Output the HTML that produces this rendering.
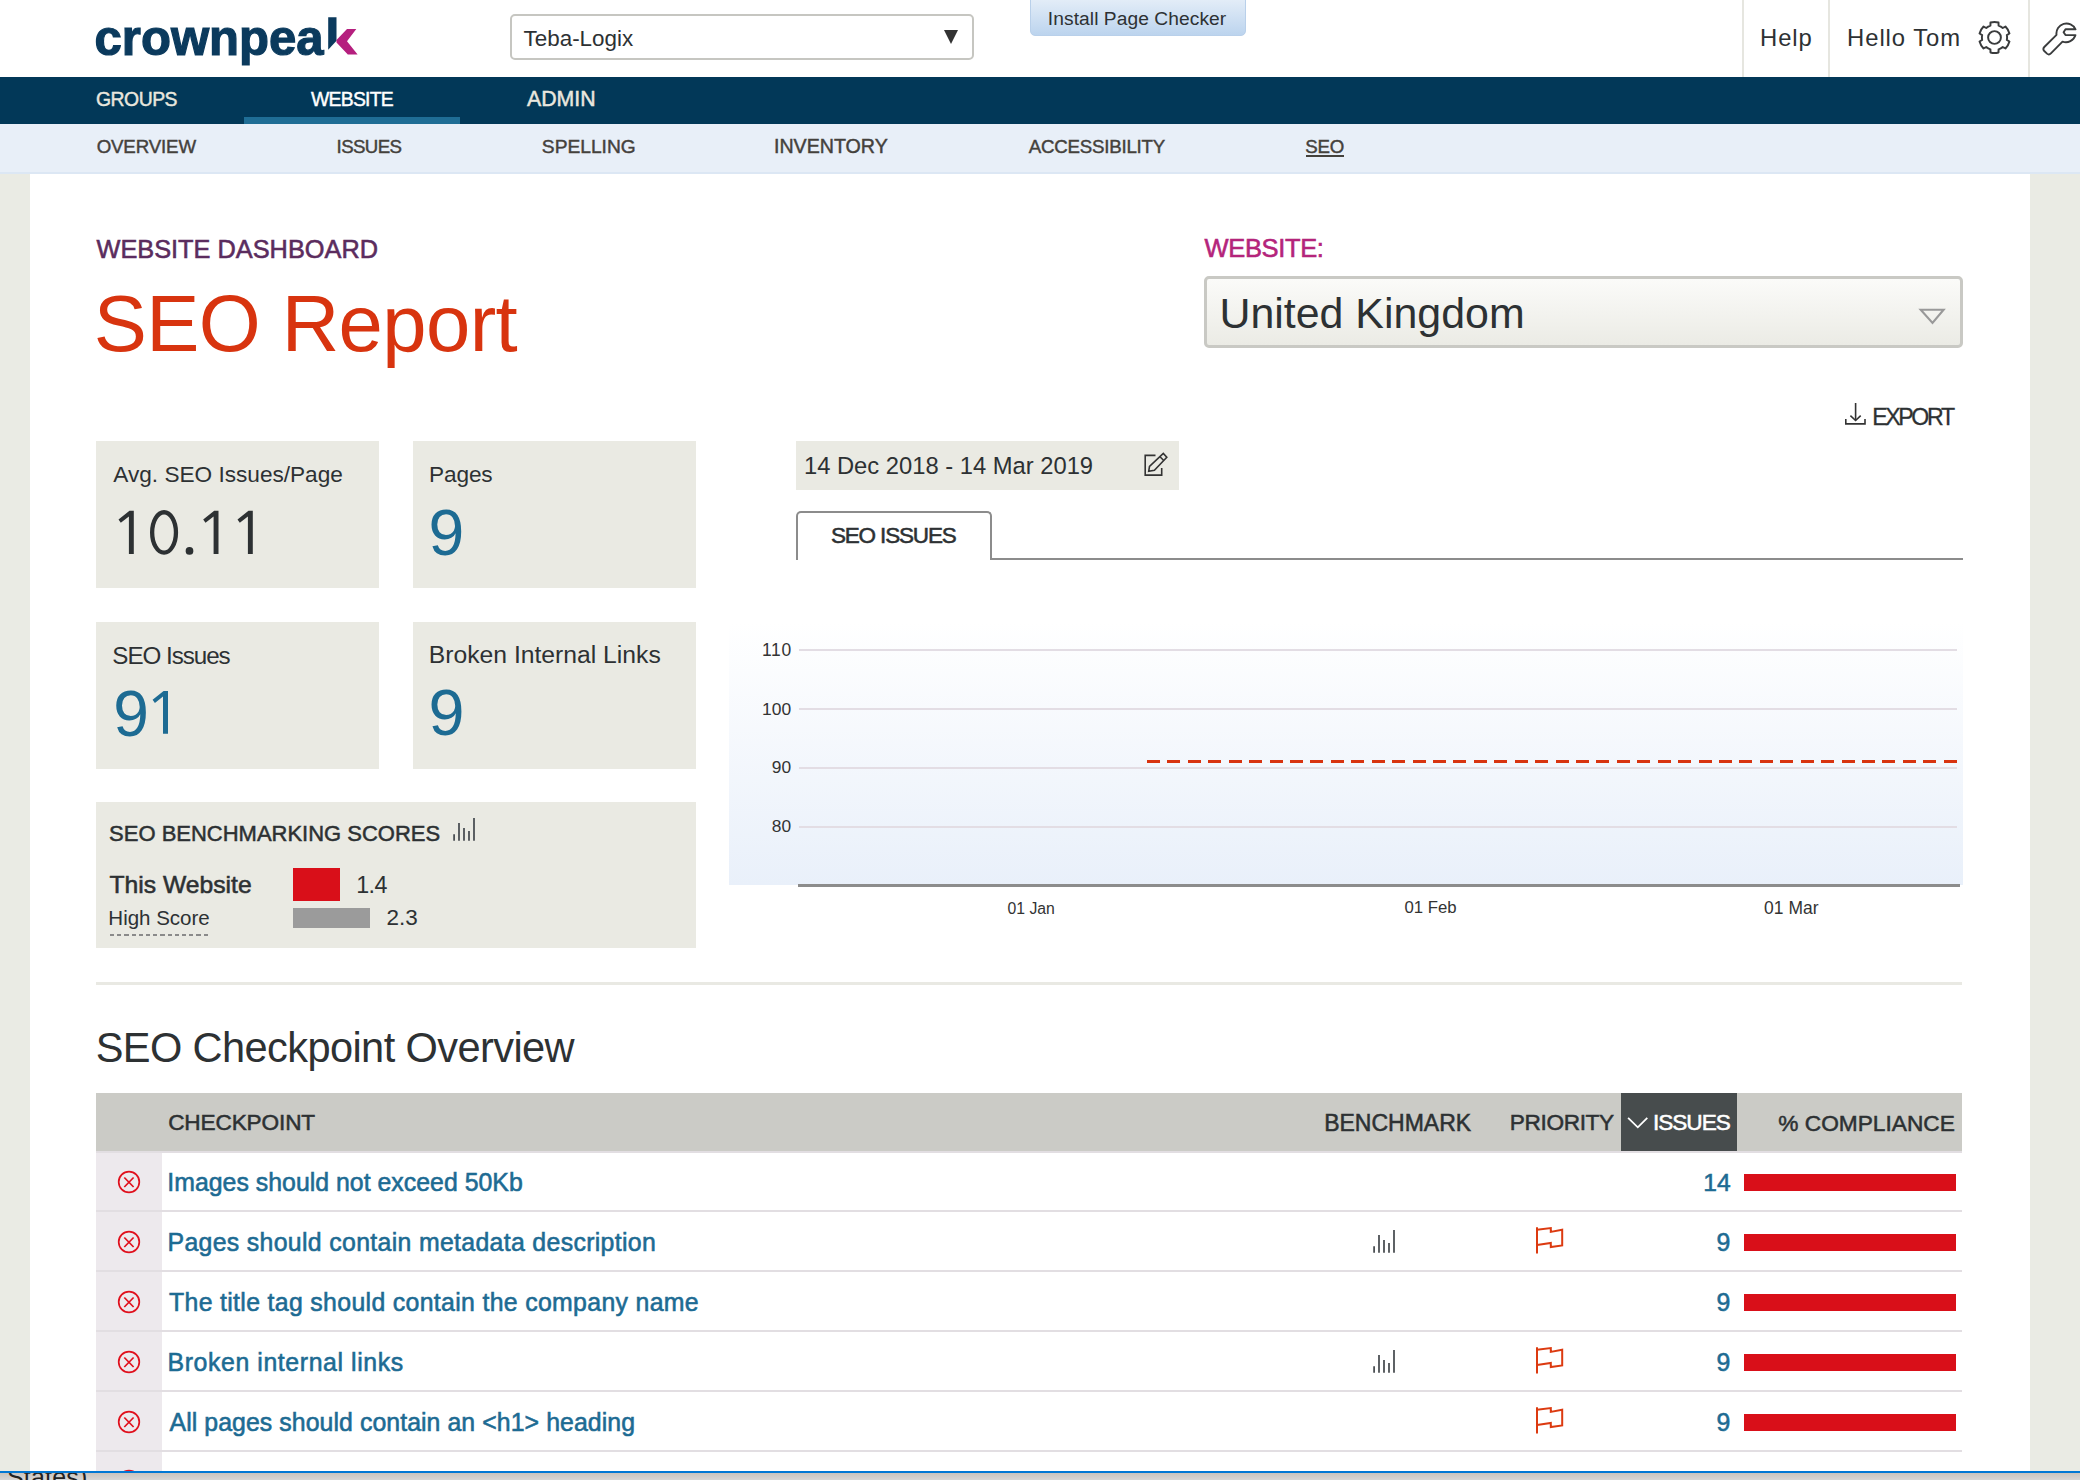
<!DOCTYPE html>
<html><head><meta charset="utf-8"><style>
html,body{margin:0;padding:0;}
body{width:2080px;height:1480px;position:relative;overflow:hidden;background:#eaebe4;font-family:"Liberation Sans",sans-serif;}
.t{position:absolute;white-space:pre;font-family:"Liberation Sans",sans-serif;}
.a{position:absolute;}
</style></head><body>
<!-- white content panel -->
<div class="a" style="left:30px;top:174px;width:2000px;height:1298px;background:#fff"></div>
<!-- header -->
<div class="a" style="left:0;top:0;width:2080px;height:77px;background:#fff"></div>
<div class="a" style="left:1742px;top:0;width:2px;height:77px;background:#e6e6e0"></div>
<div class="a" style="left:1828px;top:0;width:2px;height:77px;background:#e6e6e0"></div>
<div class="a" style="left:2028px;top:0;width:2px;height:77px;background:#e6e6e0"></div>
<!-- logo -->
<svg class="a" style="left:300px;top:0px" width="70" height="70" viewBox="300 0 70 70">
  <path d="M328.2 17.2 H336.5 V40.8 L328.2 49.7 Z" fill="#0b3a5d"/>
  <path d="M336.5 40 L347 29 H356.3 L347 41.2 L357.6 54.6 H347.8 L336.5 42.5 Z" fill="#b51f7e"/>
</svg>
<!-- dropdown -->
<div class="a" style="left:510px;top:14px;width:460px;height:42px;border:2px solid #c6c6c1;border-radius:5px;background:#fff"></div>
<svg class="a" style="left:943px;top:29px" width="16" height="16" viewBox="0 0 16 16"><path d="M1 1 H15 L8 15 Z" fill="#333"/></svg>
<!-- install button -->
<div class="a" style="left:1030px;top:-6px;width:214px;height:40px;border:1px solid #b9d0ea;border-radius:5px;background:linear-gradient(#e8f0f9,#bcd4ee)"></div>
<!-- gear -->
<svg class="a" style="left:1978px;top:21px" width="33" height="33" viewBox="0 0 32 32"><path d="M27.98 13.67 L30.49 12.12 A15.00 15.00 0 0 0 26.61 5.39 L24.00 6.79 A12.20 12.20 0 0 0 19.97 4.46 L19.88 1.51 A15.00 15.00 0 0 0 12.12 1.51 L12.03 4.46 A12.20 12.20 0 0 0 8.00 6.79 L5.39 5.39 A15.00 15.00 0 0 0 1.51 12.12 L4.02 13.67 A12.20 12.20 0 0 0 4.02 18.33 L1.51 19.88 A15.00 15.00 0 0 0 5.39 26.61 L8.00 25.21 A12.20 12.20 0 0 0 12.03 27.54 L12.12 30.49 A15.00 15.00 0 0 0 19.88 30.49 L19.97 27.54 A12.20 12.20 0 0 0 24.00 25.21 L26.61 26.61 A15.00 15.00 0 0 0 30.49 19.88 L27.98 18.33 A12.20 12.20 0 0 0 27.98 13.67 Z" fill="none" stroke="#3a3c3d" stroke-width="1.9" stroke-linejoin="round"/><circle cx="16" cy="16" r="6.2" fill="none" stroke="#3a3c3d" stroke-width="1.9"/></svg>
<!-- wrench -->
<svg class="a" style="left:2042px;top:21px" width="38" height="36" viewBox="0 0 38 36"><path d="M33.5 8.3 L23.5 8.3 L21.6 11.2 L23.5 14.1 L33.5 14.1 A10 10 0 0 1 20.5 20.6 L8.9 32.4 Q7 34.3 5 32.6 L2 29.8 Q0.6 27.9 2.3 26 L14.5 13.8 A10 10 0 0 1 33.5 8.3 Z" fill="none" stroke="#3a3c3d" stroke-width="1.9" stroke-linejoin="round"/></svg>
<!-- navy nav -->
<div class="a" style="left:0;top:77px;width:2080px;height:47px;background:#023858"></div>
<div class="a" style="left:244px;top:117px;width:216px;height:7px;background:#1f6d95"></div>
<!-- subnav -->
<div class="a" style="left:0;top:124px;width:2080px;height:48px;background:#e8eff8;border-bottom:2px solid #dce7f4"></div>
<div class="a" style="left:1306px;top:155px;width:38px;height:2px;background:#44413c"></div>
<!-- website select -->
<div class="a" style="left:1204px;top:276px;width:753px;height:66px;border:3px solid #c9c9c4;border-radius:5px;background:linear-gradient(#fbfbf9,#ebebe5)"></div>
<svg class="a" style="left:1916px;top:305px" width="32" height="22" viewBox="0 0 32 22"><path d="M4.7 4.8 H27.6 L16.5 18 Z" fill="none" stroke="#999" stroke-width="2.1" stroke-linejoin="miter"/></svg>
<!-- export icon -->
<svg class="a" style="left:1838px;top:396px" width="36" height="36" viewBox="0 0 36 36" fill="none" stroke="#333" stroke-width="1.6"><path d="M17.6 7 V24.3"/><path d="M12.4 19.7 L17.6 24.5 L22.7 19.7"/><path d="M7.8 23 V27.9 H27 V23"/></svg>
<!-- stat boxes -->
<div class="a" style="left:96px;top:441px;width:283px;height:147px;background:#eaeae3"></div>
<div class="a" style="left:413px;top:441px;width:283px;height:147px;background:#eaeae3"></div>
<div class="a" style="left:96px;top:622px;width:283px;height:147px;background:#eaeae3"></div>
<div class="a" style="left:413px;top:622px;width:283px;height:147px;background:#eaeae3"></div>
<!-- big digits -->
<svg class="a" style="left:0;top:0" width="300" height="760" viewBox="0 0 300 760"><g fill="#2d3133"><path d="M129.5 510.8 H133.8 V553.9 H128.9 V516.4 L120.8 522.7 L118.5 519.5 Z"/><path d="M214.2 510.8 H218.5 V553.9 H213.6 V516.4 L205.5 522.7 L203.2 519.5 Z"/><path d="M248.5 510.8 H252.8 V553.9 H247.9 V516.4 L239.8 522.7 L237.5 519.5 Z"/><rect x="185.7" y="547" width="7.6" height="7.8" rx="3.6"/></g><ellipse cx="164.05" cy="532.45" rx="11.9" ry="20.2" fill="none" stroke="#2d3133" stroke-width="4.3"/><g fill="#1d6b93"><path d="M163.6 691 H168.0 V733.8 H163 V696.6 L154.9 702.9 L152.6 699.7 Z"/></g></svg>
<!-- benchmark box -->
<div class="a" style="left:96px;top:802px;width:600px;height:146px;background:#eaeae3"></div>
<svg class="a" style="left:444px;top:808px" width="40" height="40" viewBox="0 0 40 40" stroke="#4d5155" stroke-width="1.8"><path d="M10.1 32.7 V26.2 M15 32.7 V15.1 M20 32.7 V20 M25 32.7 V23.1 M30 32.7 V10.1"/></svg>
<div class="a" style="left:293px;top:868px;width:47px;height:33px;background:#d90f19"></div>
<div class="a" style="left:293px;top:908px;width:77px;height:20px;background:#9b9b9b"></div>
<div class="a" style="left:110px;top:934px;width:100px;height:1.6px;background:repeating-linear-gradient(90deg,#8a8a8a 0 4.2px,transparent 4.2px 7.2px)"></div>
<!-- separator -->
<div class="a" style="left:96px;top:982px;width:1866px;height:3px;background:#e9e9e3"></div>
<!-- date box -->
<div class="a" style="left:796px;top:441px;width:383px;height:49px;background:#eaeae3"></div>
<svg class="a" style="left:1136px;top:444px" width="40" height="40" viewBox="0 0 40 40" fill="none" stroke="#333" stroke-width="1.6" stroke-linejoin="miter"><path d="M19.5 11.35 H9.2 V31.1 H25.7 V24"/><path d="M12.7 27.3 L13.5 22.4 L27.3 9.5 L30.8 13.2 L18.4 26.2 Z"/><path d="M24 12.8 L27.5 16.3"/></svg>
<!-- tab -->
<div class="a" style="left:796px;top:511px;width:192px;height:47px;border:2px solid #8c8c8c;border-bottom:none;border-radius:5px 5px 0 0;background:#fff"></div>
<div class="a" style="left:990px;top:558px;width:973px;height:2px;background:#8c8c8c"></div>
<!-- chart -->
<div class="a" style="left:729px;top:622px;width:1234px;height:263px;background:linear-gradient(#ffffff,#e9f0fa)"></div>
<div class="a" style="left:799px;top:649px;width:1158px;height:2px;background:#e3dde4"></div>
<div class="a" style="left:799px;top:708px;width:1158px;height:2px;background:#e3dde4"></div>
<div class="a" style="left:799px;top:767px;width:1158px;height:2px;background:#e3dde4"></div>
<div class="a" style="left:799px;top:826px;width:1158px;height:2px;background:#e3dde4"></div>
<div class="a" style="left:798px;top:884px;width:1162px;height:3px;background:#8c8c8c"></div>
<div class="a" style="left:1147px;top:760px;width:810px;height:3px;background:repeating-linear-gradient(90deg,#d8330f 0 13px,transparent 13px 20.43px)"></div>
<!-- table header -->
<div class="a" style="left:96px;top:1093px;width:1866px;height:58px;background:#cbcbc6"></div>
<div class="a" style="left:1621px;top:1093px;width:116px;height:58px;background:#474c4d"></div>
<svg class="a" style="left:1620px;top:1100px" width="40" height="40" viewBox="0 0 40 40"><path d="M8.1 17.8 L17.8 27.3 L27.3 17.8" fill="none" stroke="#fff" stroke-width="1.8"/></svg>
<div class="a" style="left:96px;top:1151px;width:1866px;height:2px;background:#e2dee2"></div>
<!-- left cell column -->
<div class="a" style="left:96px;top:1153px;width:66px;height:318px;background:#ede9ed"></div>
<div class="a" style="left:96px;top:1210px;width:1866px;height:2px;background:#e2dee2"></div>
<div class="a" style="left:96px;top:1270px;width:1866px;height:2px;background:#e2dee2"></div>
<div class="a" style="left:96px;top:1330px;width:1866px;height:2px;background:#e2dee2"></div>
<div class="a" style="left:96px;top:1390px;width:1866px;height:2px;background:#e2dee2"></div>
<div class="a" style="left:96px;top:1450px;width:1866px;height:2px;background:#e2dee2"></div>
<svg class="a" style="left:109px;top:1162.3px" width="40" height="40" viewBox="0 0 40 40" fill="none" stroke="#e0101d" stroke-width="1.7"><circle cx="20" cy="20" r="10.3"/><path d="M15.3 15.5 L24.6 25 M24.6 15.5 L15.3 25"/></svg>
<svg class="a" style="left:109px;top:1222.3px" width="40" height="40" viewBox="0 0 40 40" fill="none" stroke="#e0101d" stroke-width="1.7"><circle cx="20" cy="20" r="10.3"/><path d="M15.3 15.5 L24.6 25 M24.6 15.5 L15.3 25"/></svg>
<svg class="a" style="left:109px;top:1282.3px" width="40" height="40" viewBox="0 0 40 40" fill="none" stroke="#e0101d" stroke-width="1.7"><circle cx="20" cy="20" r="10.3"/><path d="M15.3 15.5 L24.6 25 M24.6 15.5 L15.3 25"/></svg>
<svg class="a" style="left:109px;top:1342.3px" width="40" height="40" viewBox="0 0 40 40" fill="none" stroke="#e0101d" stroke-width="1.7"><circle cx="20" cy="20" r="10.3"/><path d="M15.3 15.5 L24.6 25 M24.6 15.5 L15.3 25"/></svg>
<svg class="a" style="left:109px;top:1402.3px" width="40" height="40" viewBox="0 0 40 40" fill="none" stroke="#e0101d" stroke-width="1.7"><circle cx="20" cy="20" r="10.3"/><path d="M15.3 15.5 L24.6 25 M24.6 15.5 L15.3 25"/></svg>
<svg class="a" style="left:109px;top:1460.8px" width="40" height="40" viewBox="0 0 40 40" fill="none" stroke="#e0101d" stroke-width="1.7"><circle cx="20" cy="20" r="10.3"/><path d="M15.3 15.5 L24.6 25 M24.6 15.5 L15.3 25"/></svg>
<div class="a" style="left:1744px;top:1174px;width:212px;height:17px;background:#d90f19"></div>
<div class="a" style="left:1744px;top:1234px;width:212px;height:17px;background:#d90f19"></div>
<div class="a" style="left:1744px;top:1294px;width:212px;height:17px;background:#d90f19"></div>
<div class="a" style="left:1744px;top:1354px;width:212px;height:17px;background:#d90f19"></div>
<div class="a" style="left:1744px;top:1414px;width:212px;height:17px;background:#d90f19"></div>
<svg class="a" style="left:1364px;top:1220px" width="40" height="40" viewBox="0 0 40 40" stroke="#4d5155" stroke-width="1.8"><path d="M10.1 32.7 V26.2 M15 32.7 V15.1 M20 32.7 V20 M25 32.7 V23.1 M30 32.7 V10.1"/></svg>
<svg class="a" style="left:1364px;top:1340px" width="40" height="40" viewBox="0 0 40 40" stroke="#4d5155" stroke-width="1.8"><path d="M10.1 32.7 V26.2 M15 32.7 V15.1 M20 32.7 V20 M25 32.7 V23.1 M30 32.7 V10.1"/></svg>
<svg class="a" style="left:1530px;top:1220px" width="40" height="40" viewBox="0 0 40 40" fill="none" stroke="#dc3a10" stroke-width="2"><path d="M7 7.2 V33.5"/><path d="M7 9.7 L20.8 8.1 V11.9 L32.2 9.7 V25.4 L20.8 27 V23 L7 24.9"/></svg>
<svg class="a" style="left:1530px;top:1340px" width="40" height="40" viewBox="0 0 40 40" fill="none" stroke="#dc3a10" stroke-width="2"><path d="M7 7.2 V33.5"/><path d="M7 9.7 L20.8 8.1 V11.9 L32.2 9.7 V25.4 L20.8 27 V23 L7 24.9"/></svg>
<svg class="a" style="left:1530px;top:1400px" width="40" height="40" viewBox="0 0 40 40" fill="none" stroke="#dc3a10" stroke-width="2"><path d="M7 7.2 V33.5"/><path d="M7 9.7 L20.8 8.1 V11.9 L32.2 9.7 V25.4 L20.8 27 V23 L7 24.9"/></svg>
<div class="a" style="left:0;top:1471px;width:2080px;height:2px;background:#0077d4"></div>
<div class="a" style="left:0;top:1473px;width:2080px;height:7px;background:linear-gradient(#c9c3bd,#d6d6d6);overflow:hidden"><div class="t" style="left:7px;top:-8px;font-size:25px;line-height:25px;color:#222;letter-spacing:0.2px">States)</div></div>

<div class="t" style="left:94.53px;top:14.05px;font-size:49.08px;line-height:49.08px;letter-spacing:-0.00px;font-weight:700;color:#0b3a5d;-webkit-text-stroke:1.2px #0b3a5d;">crownpea</div>
<div class="t" style="left:523.55px;top:27.63px;font-size:22.42px;line-height:22.42px;letter-spacing:0.00px;font-weight:400;color:#2d3133;">Teba-Logix</div>
<div class="t" style="left:1047.87px;top:8.76px;font-size:19.19px;line-height:19.19px;letter-spacing:0.07px;font-weight:400;color:#2d3133;">Install Page Checker</div>
<div class="t" style="left:1760.09px;top:26.22px;font-size:23.84px;line-height:23.84px;letter-spacing:0.85px;font-weight:400;color:#2d3133;">Help</div>
<div class="t" style="left:1847.09px;top:26.22px;font-size:23.84px;line-height:23.84px;letter-spacing:0.93px;font-weight:400;color:#2d3133;">Hello Tom</div>
<div class="t" style="left:95.93px;top:90.27px;font-size:19.36px;line-height:19.36px;letter-spacing:-0.46px;font-weight:400;-webkit-text-stroke:0.44px #e9e7de;color:#e9e7de;">GROUPS</div>
<div class="t" style="left:311.00px;top:90.27px;font-size:19.36px;line-height:19.36px;letter-spacing:-0.74px;font-weight:400;-webkit-text-stroke:0.44px #ffffff;color:#ffffff;">WEBSITE</div>
<div class="t" style="left:527.00px;top:89.31px;font-size:21.27px;line-height:21.27px;letter-spacing:0.00px;font-weight:400;-webkit-text-stroke:0.49px #e9e7de;color:#e9e7de;">ADMIN</div>
<div class="t" style="left:96.65px;top:137.55px;font-size:18.71px;line-height:18.71px;letter-spacing:-0.14px;font-weight:400;-webkit-text-stroke:0.43px #44413c;color:#44413c;">OVERVIEW</div>
<div class="t" style="left:336.62px;top:137.55px;font-size:18.71px;line-height:18.71px;letter-spacing:-0.63px;font-weight:400;-webkit-text-stroke:0.43px #44413c;color:#44413c;">ISSUES</div>
<div class="t" style="left:541.83px;top:137.29px;font-size:19.21px;line-height:19.21px;letter-spacing:0.00px;font-weight:400;-webkit-text-stroke:0.44px #44413c;color:#44413c;">SPELLING</div>
<div class="t" style="left:773.93px;top:137.07px;font-size:19.65px;line-height:19.65px;letter-spacing:0.00px;font-weight:400;-webkit-text-stroke:0.45px #44413c;color:#44413c;">INVENTORY</div>
<div class="t" style="left:1028.80px;top:137.55px;font-size:18.71px;line-height:18.71px;letter-spacing:-0.23px;font-weight:400;-webkit-text-stroke:0.43px #44413c;color:#44413c;">ACCESSIBILITY</div>
<div class="t" style="left:1305.15px;top:137.55px;font-size:18.71px;line-height:18.71px;letter-spacing:-0.13px;font-weight:400;-webkit-text-stroke:0.43px #44413c;color:#44413c;">SEO</div>
<div class="t" style="left:96.50px;top:236.56px;font-size:25.34px;line-height:25.34px;letter-spacing:0.00px;font-weight:400;-webkit-text-stroke:0.58px #5b2c5e;color:#5b2c5e;">WEBSITE DASHBOARD</div>
<div class="t" style="left:93.81px;top:284.30px;font-size:79.67px;line-height:79.67px;letter-spacing:-0.61px;font-weight:400;color:#d8340f;">SEO Report</div>
<div class="t" style="left:1204.50px;top:236.43px;font-size:25.51px;line-height:25.51px;letter-spacing:-0.35px;font-weight:400;-webkit-text-stroke:0.58px #b4247b;color:#b4247b;">WEBSITE:</div>
<div class="t" style="left:1219.40px;top:291.88px;font-size:42.91px;line-height:42.91px;letter-spacing:-0.00px;font-weight:400;color:#2d3133;">United Kingdom</div>
<div class="t" style="left:1872.15px;top:406.21px;font-size:23.15px;line-height:23.15px;letter-spacing:-2.37px;font-weight:400;-webkit-text-stroke:0.29px #2d3133;color:#2d3133;">EXPORT</div>
<div class="t" style="left:113.30px;top:464.07px;font-size:22.63px;line-height:22.63px;letter-spacing:-0.01px;font-weight:400;color:#2d3133;">Avg. SEO Issues/Page</div>
<div class="t" style="left:428.99px;top:464.07px;font-size:22.63px;line-height:22.63px;letter-spacing:-0.12px;font-weight:400;color:#2d3133;">Pages</div>
<div class="t" style="left:428.43px;top:500.80px;font-size:64.24px;line-height:64.24px;letter-spacing:0.00px;font-weight:400;color:#1d6b93;">9</div>
<div class="t" style="left:112.33px;top:643.58px;font-size:24.20px;line-height:24.20px;letter-spacing:-1.04px;font-weight:400;color:#2d3133;">SEO Issues</div>
<div class="t" style="left:113.24px;top:681.63px;font-size:64.10px;line-height:64.10px;letter-spacing:0.00px;font-weight:400;color:#1d6b93;">9</div>
<div class="t" style="left:428.82px;top:643.34px;font-size:24.69px;line-height:24.69px;letter-spacing:0.00px;font-weight:400;color:#2d3133;">Broken Internal Links</div>
<div class="t" style="left:428.41px;top:680.74px;font-size:64.68px;line-height:64.68px;letter-spacing:0.00px;font-weight:400;color:#1d6b93;">9</div>
<div class="t" style="left:109.12px;top:822.55px;font-size:21.99px;line-height:21.99px;letter-spacing:0.00px;font-weight:400;-webkit-text-stroke:0.50px #2d3133;color:#2d3133;">SEO BENCHMARKING SCORES</div>
<div class="t" style="left:109.51px;top:872.89px;font-size:24.68px;line-height:24.68px;letter-spacing:0.00px;font-weight:400;-webkit-text-stroke:0.57px #2d3133;color:#2d3133;">This Website</div>
<div class="t" style="left:356.17px;top:873.59px;font-size:23.28px;line-height:23.28px;letter-spacing:-0.57px;font-weight:400;color:#2d3133;">1.4</div>
<div class="t" style="left:108.36px;top:908.33px;font-size:20.54px;line-height:20.54px;letter-spacing:-0.02px;font-weight:400;color:#2d3133;">High Score</div>
<div class="t" style="left:386.58px;top:907.35px;font-size:22.47px;line-height:22.47px;letter-spacing:-0.00px;font-weight:400;color:#2d3133;">2.3</div>
<div class="t" style="left:803.94px;top:454.06px;font-size:23.75px;line-height:23.75px;letter-spacing:0.00px;font-weight:400;color:#2d3133;">14 Dec 2018 - 14 Mar 2019</div>
<div class="t" style="left:830.90px;top:525.29px;font-size:22.50px;line-height:22.50px;letter-spacing:-1.15px;font-weight:400;-webkit-text-stroke:0.52px #2d3133;color:#2d3133;">SEO ISSUES</div>
<div class="t" style="left:762.08px;top:642.23px;font-size:17.44px;line-height:17.44px;letter-spacing:0.62px;font-weight:400;color:#333;">110</div>
<div class="t" style="left:762.08px;top:700.85px;font-size:17.41px;line-height:17.41px;letter-spacing:0.00px;font-weight:400;color:#333;">100</div>
<div class="t" style="left:771.81px;top:759.47px;font-size:17.37px;line-height:17.37px;letter-spacing:0.00px;font-weight:400;color:#333;">90</div>
<div class="t" style="left:771.81px;top:818.27px;font-size:17.37px;line-height:17.37px;letter-spacing:0.00px;font-weight:400;color:#333;">80</div>
<div class="t" style="left:1007.53px;top:900.57px;font-size:15.77px;line-height:15.77px;letter-spacing:0.00px;font-weight:400;color:#333;">01 Jan</div>
<div class="t" style="left:1404.50px;top:900.09px;font-size:16.74px;line-height:16.74px;letter-spacing:0.00px;font-weight:400;color:#333;">01 Feb</div>
<div class="t" style="left:1763.98px;top:899.73px;font-size:17.44px;line-height:17.44px;letter-spacing:0.07px;font-weight:400;color:#333;">01 Mar</div>
<div class="t" style="left:95.64px;top:1026.80px;font-size:41.58px;line-height:41.58px;letter-spacing:-0.60px;font-weight:400;color:#2d3133;">SEO Checkpoint Overview</div>
<div class="t" style="left:168.17px;top:1112.47px;font-size:22.63px;line-height:22.63px;letter-spacing:-0.15px;font-weight:400;-webkit-text-stroke:0.52px #2d3133;color:#2d3133;">CHECKPOINT</div>
<div class="t" style="left:1324.16px;top:1112.28px;font-size:23.01px;line-height:23.01px;letter-spacing:-0.00px;font-weight:400;-webkit-text-stroke:0.53px #2d3133;color:#2d3133;">BENCHMARK</div>
<div class="t" style="left:1509.69px;top:1112.47px;font-size:22.63px;line-height:22.63px;letter-spacing:-0.34px;font-weight:400;-webkit-text-stroke:0.52px #2d3133;color:#2d3133;">PRIORITY</div>
<div class="t" style="left:1652.96px;top:1112.47px;font-size:22.63px;line-height:22.63px;letter-spacing:-1.03px;font-weight:400;-webkit-text-stroke:0.52px #ffffff;color:#ffffff;">ISSUES</div>
<div class="t" style="left:1778.32px;top:1112.44px;font-size:22.69px;line-height:22.69px;letter-spacing:-0.00px;font-weight:400;-webkit-text-stroke:0.52px #2d3133;color:#2d3133;">% COMPLIANCE</div>
<div class="t" style="left:167.26px;top:1171.06px;font-size:24.85px;line-height:24.85px;letter-spacing:0.02px;font-weight:400;-webkit-text-stroke:0.57px #1d6b93;color:#1d6b93;">Images should not exceed 50Kb</div>
<div class="t" style="left:1703.28px;top:1171.18px;font-size:24.60px;line-height:24.60px;letter-spacing:0.00px;font-weight:400;-webkit-text-stroke:0.56px #1d6b93;color:#1d6b93;">14</div>
<div class="t" style="left:167.51px;top:1231.06px;font-size:24.85px;line-height:24.85px;letter-spacing:0.33px;font-weight:400;-webkit-text-stroke:0.57px #1d6b93;color:#1d6b93;">Pages should contain metadata description</div>
<div class="t" style="left:1716.51px;top:1231.06px;font-size:24.85px;line-height:24.85px;letter-spacing:0.00px;font-weight:400;-webkit-text-stroke:0.57px #1d6b93;color:#1d6b93;">9</div>
<div class="t" style="left:169.00px;top:1291.06px;font-size:24.85px;line-height:24.85px;letter-spacing:0.33px;font-weight:400;-webkit-text-stroke:0.57px #1d6b93;color:#1d6b93;">The title tag should contain the company name</div>
<div class="t" style="left:1716.51px;top:1291.06px;font-size:24.85px;line-height:24.85px;letter-spacing:0.00px;font-weight:400;-webkit-text-stroke:0.57px #1d6b93;color:#1d6b93;">9</div>
<div class="t" style="left:167.51px;top:1351.06px;font-size:24.85px;line-height:24.85px;letter-spacing:0.60px;font-weight:400;-webkit-text-stroke:0.57px #1d6b93;color:#1d6b93;">Broken internal links</div>
<div class="t" style="left:1716.51px;top:1351.06px;font-size:24.85px;line-height:24.85px;letter-spacing:0.00px;font-weight:400;-webkit-text-stroke:0.57px #1d6b93;color:#1d6b93;">9</div>
<div class="t" style="left:169.50px;top:1411.06px;font-size:24.85px;line-height:24.85px;letter-spacing:0.07px;font-weight:400;-webkit-text-stroke:0.57px #1d6b93;color:#1d6b93;">All pages should contain an &lt;h1&gt; heading</div>
<div class="t" style="left:1716.51px;top:1411.06px;font-size:24.85px;line-height:24.85px;letter-spacing:0.00px;font-weight:400;-webkit-text-stroke:0.57px #1d6b93;color:#1d6b93;">9</div>
</body></html>
